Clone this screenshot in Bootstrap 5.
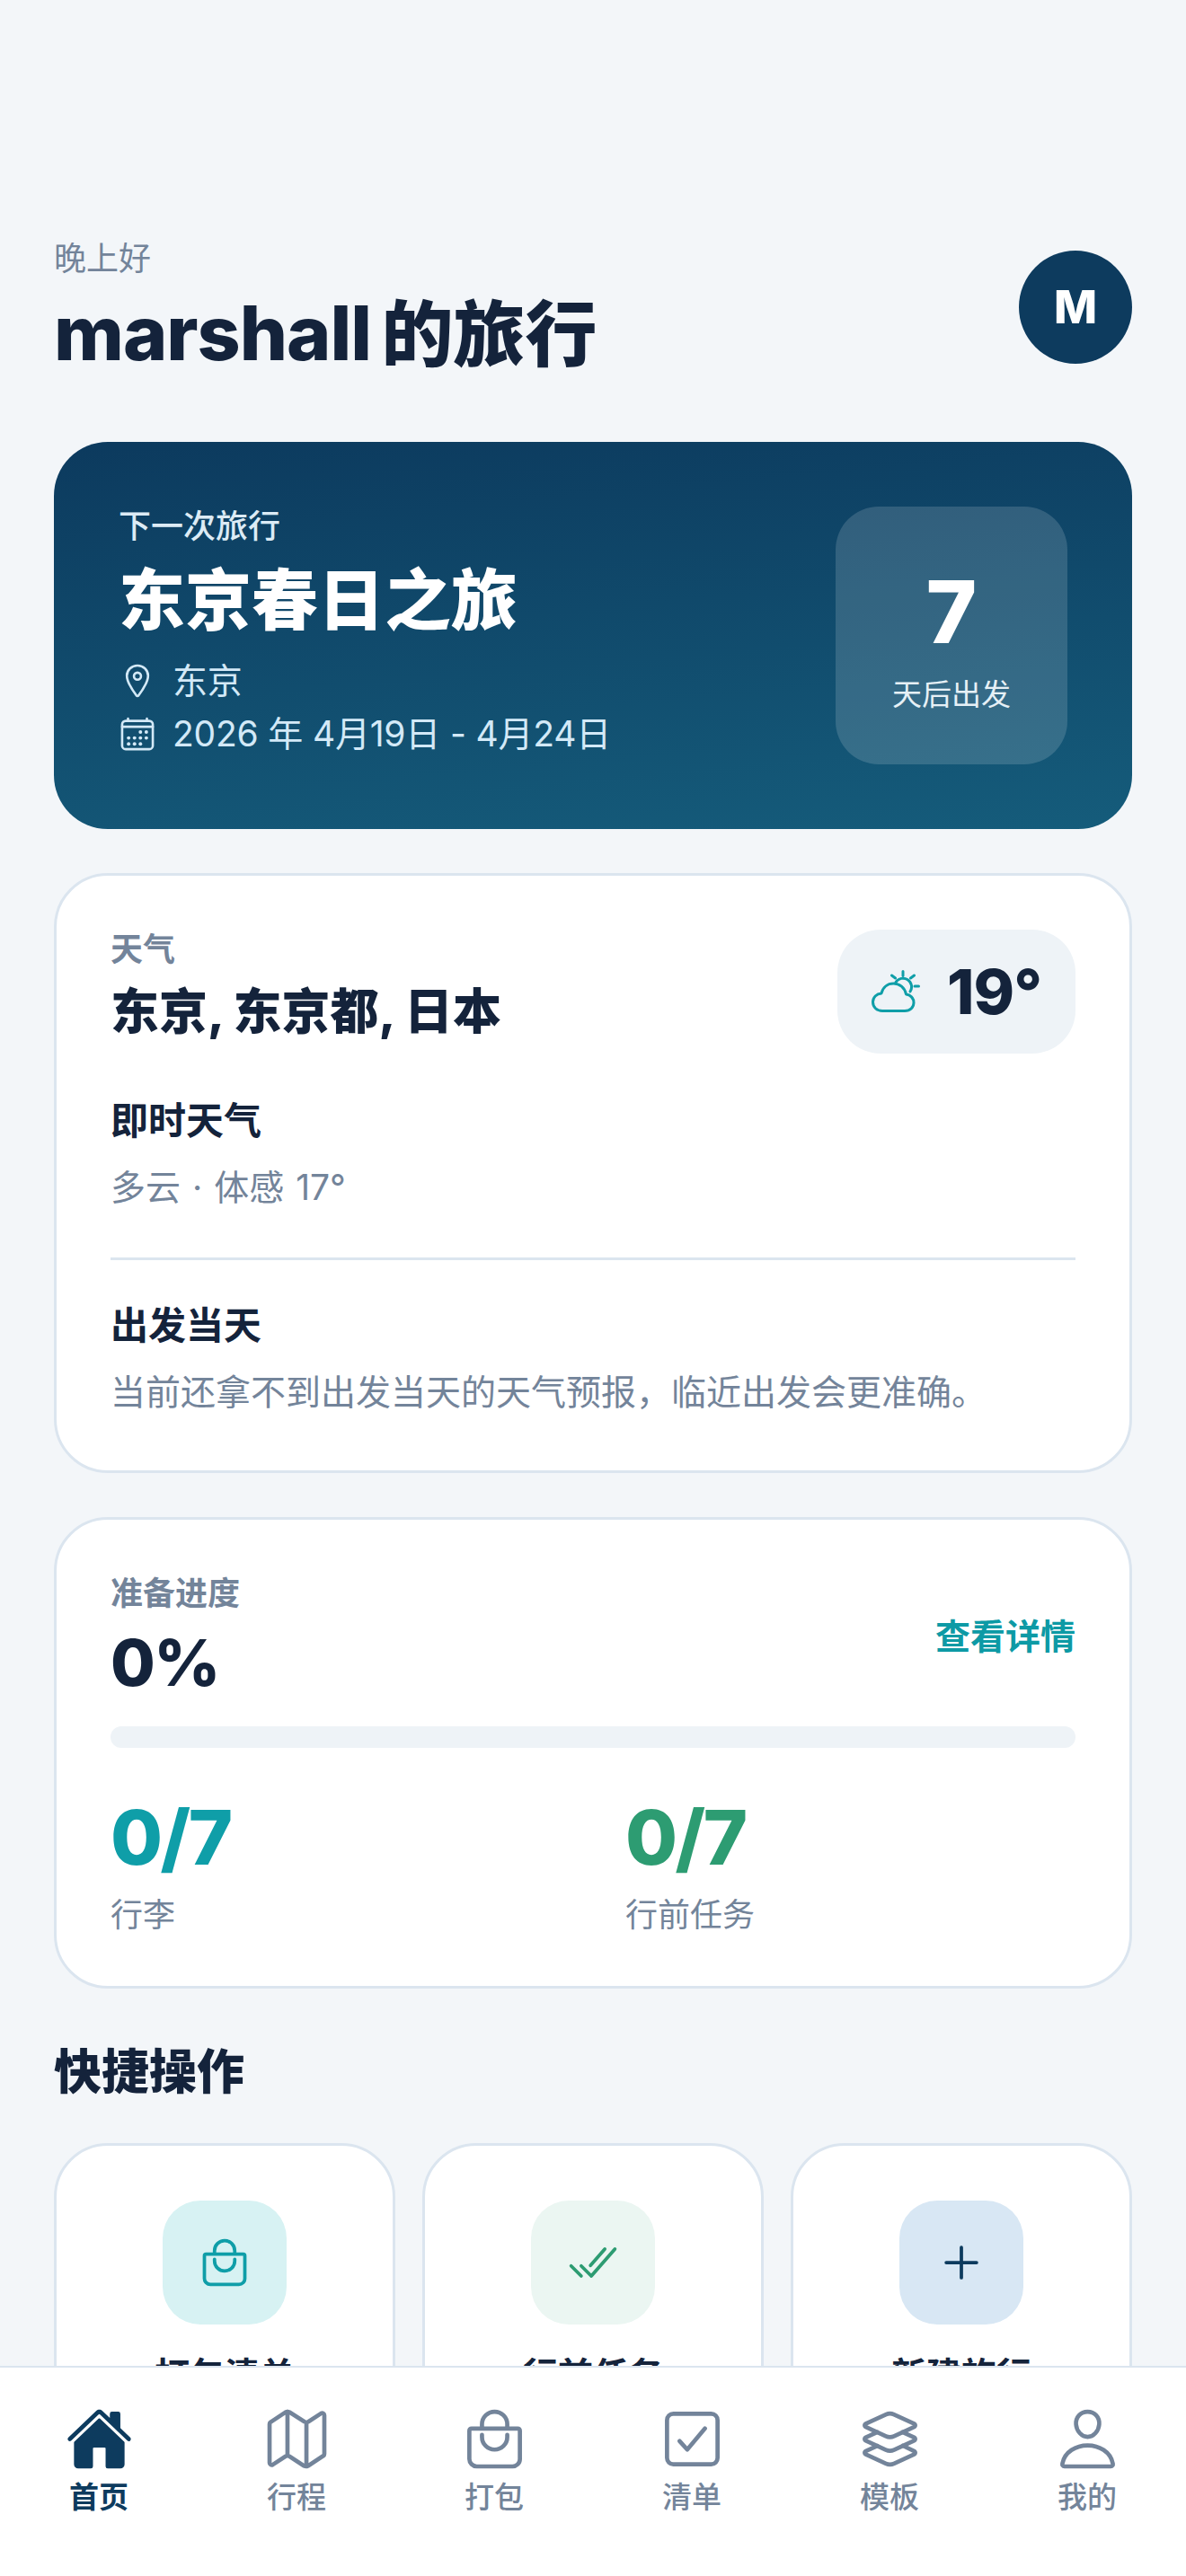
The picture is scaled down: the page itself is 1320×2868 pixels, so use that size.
<!DOCTYPE html>
<html lang="zh-CN">
<head>
<meta charset="UTF-8" />
<title>旅行首页</title>
<link href="https://cdn.jsdelivr.net/npm/bootstrap@5.3.3/dist/css/bootstrap.min.css" rel="stylesheet" />
<style>
  html, body { height: 100%; }
  body { font-family: Inter, "Noto Sans CJK SC", sans-serif; background: #f3f6f9; color: #14233b; }
  svg { display: block; flex: none; }
  .ol { fill: none; stroke: currentColor; stroke-width: 32; stroke-linecap: round; stroke-linejoin: round; }
  .ol-px { fill: none; stroke: currentColor; stroke-width: 3; stroke-linecap: round; stroke-linejoin: round; }
  .app-shell { height: 2868px; }
  .scroll-area { padding: 264px 60px 0; min-height: 0; }
  .greet { font-size: 36px; line-height: 48px; color: #73849a; }
  .page-title { font-size: 84px; line-height: 96px; font-weight: 800; margin: 11px 0 0; letter-spacing: -1px; word-spacing: -6px; }
  .title-cjk { font-size: 80px; letter-spacing: 0; }
  .avatar { width: 126px; height: 126px; background: #0d3b5e; color: #fff; font-size: 51px; font-weight: 800; }
  .hero { margin-top: 72px; height: 431px; padding: 72px; border-radius: 60px; background: linear-gradient(175deg, #0c3a5e, #155c7b); color: #fff; }
  .hero-label { font-size: 36px; line-height: 45px; color: #dcebf5; font-weight: 500; }
  .hero-title { font-size: 74px; line-height: 96px; font-weight: 800; margin: 11px 0 18px; }
  .hero-meta { font-size: 39px; line-height: 48px; color: #d3e9f7; gap: 18px; letter-spacing: -.2px; }
  .hero-meta + .hero-meta { margin-top: 11px; }
  .count-box { width: 258px; background: rgba(255, 255, 255, .15); border-radius: 48px; padding-top: 6px; }
  .count-num { font-size: 96px; line-height: 110px; font-weight: 800; }
  .count-cap { font-size: 33px; line-height: 44px; color: #e6f0f6; margin-top: 15px; }
  .panel { background: #fff; border: 3px solid #dbe5ef; border-radius: 60px; padding: 60px; margin-top: 49px; }
  .panel-tight { padding-bottom: 55px; }
  .eyebrow { font-size: 36px; line-height: 44px; font-weight: 600; color: #73849a; }
  .place { font-size: 54px; line-height: 72px; font-weight: 800; margin-top: 12px; }
  .temp-pill { width: 265px; height: 138px; background: #eef3f7; border-radius: 48px; color: #0f9ea8; gap: 30px; }
  .temp-num { font-size: 69px; line-height: 1; font-weight: 800; color: #14233b; letter-spacing: -1px; }
  .sub-head { font-size: 42px; line-height: 54px; font-weight: 700; }
  .now-head { margin-top: 48px; }
  .sub-text { font-size: 39px; line-height: 54px; color: #73849a; margin-top: 20px; word-spacing: 2px; }
  .rule { height: 3px; background: #dbe5ef; margin: 51px 0 46px; }
  .pct { font-size: 72px; line-height: 84px; font-weight: 800; margin-top: 13px; letter-spacing: -1.5px; }
  .detail-link { font-size: 39px; font-weight: 700; color: #0d9aa5; text-decoration: none; }
  .track { height: 24px; background: #eef3f7; border-radius: 12px; margin-top: 29px; }
  .stat-row { gap: 72px; margin-top: 50px; }
  .stat-col { flex: 1 1 0; }
  .stat-num { font-size: 84px; line-height: 100px; font-weight: 800; letter-spacing: -2.5px; }
  .stat-cap { font-size: 36px; line-height: 48px; color: #73849a; margin-top: 12px; }
  .tone-teal { color: #0f9ea8; }
  .tone-green { color: #2d9c72; }
  .section-title { font-size: 53px; line-height: 72px; font-weight: 800; margin: 57px 0 0; }
  .quick-row { gap: 30px; margin-top: 43px; }
  .quick-card { flex: 1 1 0; background: #fff; border: 3px solid #dbe5ef; border-radius: 60px; padding: 61px 0 60px; }
  .quick-icon { width: 138px; height: 138px; border-radius: 42px; }
  .bg-teal { background: #d7f2f3; color: #0f9ea8; }
  .bg-green { background: #ebf6f2; color: #2d9c72; }
  .bg-navy { background: #d8e7f4; color: #0d3b5e; }
  .quick-label { font-size: 39px; line-height: 54px; font-weight: 700; margin-top: 29px; }
  .tab-bar { height: 234px; background: #fff; border-top: 2px solid #dbe5ef; padding-top: 42px; }
  .tab-item { flex: 1 1 0; color: #73849a; font-size: 33px; line-height: 44px; font-weight: 500; text-decoration: none; gap: 5px; }
  .tab-item.is-on { color: #0d3b5e; font-weight: 600; }
</style>
</head>
<body>
<div class="app-shell d-flex flex-column overflow-hidden">
  <div class="scroll-area flex-grow-1 overflow-hidden">

    <div class="d-flex justify-content-between align-items-center">
      <div>
        <div class="greet">晚上好</div>
        <h1 class="page-title">marshall <span class="title-cjk">的旅行</span></h1>
      </div>
      <div class="avatar rounded-circle d-flex align-items-center justify-content-center">M</div>
    </div>

    <div class="hero d-flex justify-content-between">
      <div>
        <div class="hero-label">下一次旅行</div>
        <h2 class="hero-title">东京春日之旅</h2>
        <div class="hero-meta d-flex align-items-center">
          <svg width="42" height="42" viewBox="0 0 512 512"><path class="ol" d="M256 48c-79.5 0-144 61.39-144 137 0 87 96 224.87 131.25 272.49a15.77 15.77 0 0025.5 0C304 409.89 400 272.07 400 185c0-75.61-64.5-137-144-137z"/><circle class="ol" cx="256" cy="192" r="48"/></svg>
          <span>东京</span>
        </div>
        <div class="hero-meta d-flex align-items-center">
          <svg width="42" height="42" viewBox="0 0 512 512" fill="currentColor"><rect class="ol" x="48" y="80" width="416" height="384" rx="48"/><circle cx="296" cy="232" r="24"/><circle cx="376" cy="232" r="24"/><circle cx="296" cy="312" r="24"/><circle cx="376" cy="312" r="24"/><circle cx="136" cy="312" r="24"/><circle cx="216" cy="312" r="24"/><circle cx="136" cy="392" r="24"/><circle cx="216" cy="392" r="24"/><circle cx="296" cy="392" r="24"/><path class="ol" d="M128 48v32M384 48v32M464 160H48"/></svg>
          <span>2026 年 4月19日 - 4月24日</span>
        </div>
      </div>
      <div class="count-box d-flex flex-column align-items-center justify-content-center">
        <div class="count-num">7</div>
        <div class="count-cap">天后出发</div>
      </div>
    </div>

    <div class="panel">
      <div class="d-flex justify-content-between align-items-start">
        <div>
          <div class="eyebrow">天气</div>
          <div class="place">东京, 东京都, 日本</div>
        </div>
        <div class="temp-pill d-flex align-items-center justify-content-center">
          <svg width="54" height="48" viewBox="0 0 54 48"><path class="ol-px" d="M12 45.5H37C43 45.5 47 41.5 47 36.5C47 31 43 27.5 38.5 27C37 19.5 31 15 24.5 15C17.5 15 12.5 19.5 11 26C5.5 26.5 1.5 30.5 1.5 35.5C1.5 41.5 6 45.5 12 45.5Z"/><path class="ol-px" d="M27 13.5A9.5 9.5 0 0 1 43 24M35 1.5v5M22.5 6l4 3M47.5 6l-4 3M48 18h4.5"/></svg>
          <span class="temp-num">19°</span>
        </div>
      </div>
      <div class="sub-head now-head">即时天气</div>
      <div class="sub-text">多云 · 体感 17°</div>
      <div class="rule"></div>
      <div class="sub-head">出发当天</div>
      <div class="sub-text">当前还拿不到出发当天的天气预报，临近出发会更准确。</div>
    </div>

    <div class="panel panel-tight">
      <div class="d-flex justify-content-between align-items-center">
        <div>
          <div class="eyebrow">准备进度</div>
          <div class="pct">0%</div>
        </div>
        <a class="detail-link" href="#">查看详情</a>
      </div>
      <div class="track"></div>
      <div class="stat-row d-flex">
        <div class="stat-col">
          <div class="stat-num tone-teal">0/7</div>
          <div class="stat-cap">行李</div>
        </div>
        <div class="stat-col">
          <div class="stat-num tone-green">0/7</div>
          <div class="stat-cap">行前任务</div>
        </div>
      </div>
    </div>

    <h3 class="section-title">快捷操作</h3>
    <div class="quick-row d-flex">
      <div class="quick-card d-flex flex-column align-items-center">
        <div class="quick-icon bg-teal d-flex align-items-center justify-content-center">
          <svg width="60" height="60" viewBox="0 0 512 512"><path class="ol" d="M80 176a16 16 0 00-16 16v216c0 30.24 25.76 56 56 56h272c30.24 0 56-24.51 56-54.75V192a16 16 0 00-16-16zM160 176v-32a96 96 0 0196-96h0a96 96 0 0196 96v32"/><path class="ol" d="M160 224v16a96 96 0 0096 96h0a96 96 0 0096-96v-16"/></svg>
        </div>
        <div class="quick-label">打包清单</div>
      </div>
      <div class="quick-card d-flex flex-column align-items-center">
        <div class="quick-icon bg-green d-flex align-items-center justify-content-center">
          <svg width="60" height="60" viewBox="0 0 512 512"><path class="ol" d="M464 128L240 384l-96-96M144 384l-96-96M368 128L232 284"/></svg>
        </div>
        <div class="quick-label">行前任务</div>
      </div>
      <div class="quick-card d-flex flex-column align-items-center">
        <div class="quick-icon bg-navy d-flex align-items-center justify-content-center">
          <svg width="60" height="60" viewBox="0 0 512 512"><path class="ol" d="M256 112v288M400 256H112"/></svg>
        </div>
        <div class="quick-label">新建旅行</div>
      </div>
    </div>
  </div>

  <nav class="tab-bar d-flex flex-shrink-0">
    <a class="tab-item is-on d-flex flex-column align-items-center" href="#">
      <svg width="75" height="75" viewBox="0 0 512 512" fill="currentColor"><path d="M261.56 101.28a8 8 0 00-11.06 0L66.4 277.15a8 8 0 00-2.47 5.79L63.9 448a32 32 0 0032 32H192a16 16 0 0016-16V328a8 8 0 018-8h80a8 8 0 018 8v136a16 16 0 0016 16h96.06a32 32 0 0032-32V282.94a8 8 0 00-2.47-5.79z"/><path d="M490.91 244.15l-74.8-71.56V64a16 16 0 00-16-16h-48a16 16 0 00-16 16v32l-57.92-55.38C272.77 35.14 264.71 32 256 32c-8.68 0-16.72 3.14-22.14 8.63l-212.7 203.5c-6.22 6-7 15.87-1.34 22.37A16 16 0 0043 267.56L250.5 69.28a8 8 0 0111.06 0l207.52 198.28a16 16 0 0022.59-.44c6.14-6.36 5.63-16.86-.76-22.97z"/></svg>
      <span>首页</span>
    </a>
    <a class="tab-item d-flex flex-column align-items-center" href="#">
      <svg width="75" height="75" viewBox="0 0 512 512"><path class="ol" d="M313.27 124.64L198.73 51.36a32 32 0 00-29.28.35L56.51 127.49A16 16 0 0048 141.63v295.8a16 16 0 0023.49 14.14l97.82-63.79a32 32 0 0129.5-.24l111.86 73a32 32 0 0029.27-.11l115.43-75.94a16 16 0 008.63-14.2V74.57a16 16 0 00-23.49-14.14l-98 63.86a32 32 0 01-29.24.35zM328 128v336M184 48v336"/></svg>
      <span>行程</span>
    </a>
    <a class="tab-item d-flex flex-column align-items-center" href="#">
      <svg width="75" height="75" viewBox="0 0 512 512"><path class="ol" d="M80 176a16 16 0 00-16 16v216c0 30.24 25.76 56 56 56h272c30.24 0 56-24.51 56-54.75V192a16 16 0 00-16-16zM160 176v-32a96 96 0 0196-96h0a96 96 0 0196 96v32"/><path class="ol" d="M160 224v16a96 96 0 0096 96h0a96 96 0 0096-96v-16"/></svg>
      <span>打包</span>
    </a>
    <a class="tab-item d-flex flex-column align-items-center" href="#">
      <svg width="75" height="75" viewBox="0 0 512 512"><path class="ol" d="M352 176L217.6 336 160 272"/><rect class="ol" x="64" y="64" width="384" height="384" rx="48" ry="48"/></svg>
      <span>清单</span>
    </a>
    <a class="tab-item d-flex flex-column align-items-center" href="#">
      <svg width="75" height="75" viewBox="0 0 512 512"><path class="ol" d="M434.8 137.65l-149.36-68.1c-16.19-7.4-42.69-7.4-58.88 0L77.3 137.65c-17.6 8-17.6 21.09 0 29.09l148 67.5c16.89 7.7 44.69 7.7 61.58 0l148-67.5c17.52-8 17.52-21.1-.08-29.09zM160 308.52l-82.7 37.11c-17.6 8-17.6 21.1 0 29.1l148 67.5c16.89 7.69 44.69 7.69 61.58 0l148-67.5c17.6-8 17.6-21.1 0-29.1l-79.94-38.47"/><path class="ol" d="M160 204.48l-82.8 37.16c-17.6 8-17.6 21.1 0 29.1l148 67.49c16.89 7.7 44.69 7.7 61.58 0l148-67.49c17.7-8 17.7-21.1.1-29.1L352 204.48"/></svg>
      <span>模板</span>
    </a>
    <a class="tab-item d-flex flex-column align-items-center" href="#">
      <svg width="75" height="75" viewBox="0 0 512 512"><path class="ol" d="M344 144c-3.92 52.87-44 96-88 96s-84.15-43.12-88-96c-4-55 35-96 88-96s92 42 88 96z"/><path class="ol" d="M256 304c-87 0-175.3 48-191.64 138.6C62.39 453.52 68.57 464 80 464h352c11.44 0 17.62-10.48 15.65-21.4C431.3 352 343 304 256 304z"/></svg>
      <span>我的</span>
    </a>
  </nav>
</div>
<script src="https://cdn.jsdelivr.net/npm/bootstrap@5.3.3/dist/js/bootstrap.bundle.min.js"></script>
</body>
</html>
